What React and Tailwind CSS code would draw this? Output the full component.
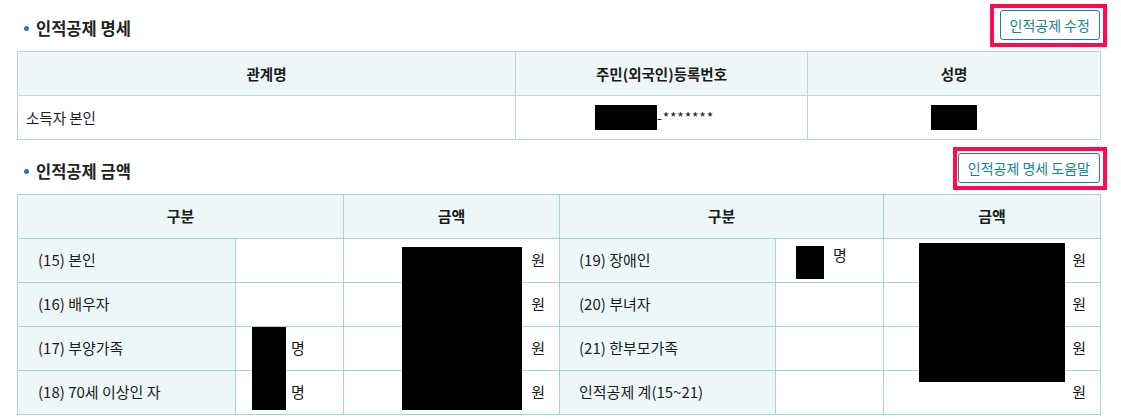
import React from "react";

const font = { fontFamily: '"Noto Sans CJK KR", "Noto Sans", sans-serif' };

function SectionHead({ title, button, redW }) {
  return (
    <div className="flex items-center justify-between h-[30px]">
      <div className="flex items-center pl-[7px] pt-[6px]">
        <span className="w-[5px] h-[5px] rounded-full bg-[#2b6fd6] mr-[7px]" />
        <span className="text-[16.5px] font-bold text-[#222]">{title}</span>
      </div>
      <div className="relative">
        <button className="h-[30px] px-[9px] border border-[#16858f] rounded-[3px] text-[14px] text-[#16858f] bg-white leading-none">
          {button}
        </button>
        <div className={`absolute top-[-6px] bottom-[-7px] right-[-7px] border-4 border-[#ff0a4f] pointer-events-none ${redW}`} />
      </div>
    </div>
  );
}

const th = "border border-[#bcd4da] bg-[#eef7f7] text-[14.5px] font-bold text-[#1a1a1a] text-center";
const td = "border border-[#bcd4da] text-[14.5px] text-[#1a1a1a]";
const th2 = "border border-[#a8d2d8] bg-[#eef7f7] text-[15px] font-bold text-[#1a1a1a] text-center";
const lab = "border border-[#a8d2d8] bg-[#eef7f7] text-[15px] text-[#1a1a1a]";
const cell = "border border-[#a8d2d8] bg-white text-[15px] text-[#1a1a1a]";

const rows = [
  ["(15) 본인", false, "(19) 장애인", true],
  ["(16) 배우자", false, "(20) 부녀자", false],
  ["(17) 부양가족", true, "(21) 한부모가족", false],
  ["(18) 70세 이상인 자", true, "인적공제 계(15~21)", false],
];

export default function App() {
  return (
    <div className="w-[1121px] h-[419px] bg-white overflow-hidden" style={font}>
      <div className="w-[1083px] ml-[17px] pt-[10px]">
        <SectionHead title="인적공제 명세" button="인적공제 수정" redW="left-[-10px]" />
        <table className="w-full mt-[11px] border-collapse table-fixed">
          <colgroup>
            <col className="w-[498px]" />
            <col className="w-[292px]" />
            <col className="w-[293px]" />
          </colgroup>
          <thead>
            <tr className="h-[44px]">
              <th className={th}>관계명</th>
              <th className={th}>주민(외국인)등록번호</th>
              <th className={th}>성명</th>
            </tr>
          </thead>
          <tbody>
            <tr className="h-[44px]">
              <td className={`${td} pl-[8px]`}>소득자 본인</td>
              <td className={td}>
                <div className="flex items-center justify-center pr-[14px]">
                  <span className="w-[62px] h-[25px] bg-black" />
                  <span className="text-[14px] tracking-[0.8px]">-*******</span>
                </div>
              </td>
              <td className={td}>
                <div className="flex justify-center">
                  <span className="w-[46px] h-[25px] bg-black" />
                </div>
              </td>
            </tr>
          </tbody>
        </table>

        <div className="mt-[13px]">
          <SectionHead title="인적공제 금액" button="인적공제 명세 도움말" redW="left-[-5px]" />
        </div>
        <div className="relative mt-[11px]">
          <table className="w-full border-collapse table-fixed">
            <colgroup>
              <col className="w-[218px]" />
              <col className="w-[108px]" />
              <col className="w-[216px]" />
              <col className="w-[216px]" />
              <col className="w-[108px]" />
              <col className="w-[217px]" />
            </colgroup>
            <thead>
              <tr className="h-[44px]">
                <th colSpan={2} className={th2}>구분</th>
                <th className={th2}>금액</th>
                <th colSpan={2} className={th2}>구분</th>
                <th className={th2}>금액</th>
              </tr>
            </thead>
            <tbody>
              {rows.map(([l, lc, r, rc]) => (
                <tr key={l} className="h-[44px]">
                  <td className={`${lab} pl-[20px]`}>{l}</td>
                  <td className={`${cell} pl-[55px]`}>{lc && "명"}</td>
                  <td className={`${cell} text-right pr-[14px]`}>원</td>
                  <td className={`${lab} pl-[19px]`}>{r}</td>
                  <td className={`${cell} pl-[57px]`}>
                    {rc && <span className="relative top-[-5px]">명</span>}
                  </td>
                  <td className={`${cell} text-right pr-[14px]`}>원</td>
                </tr>
              ))}
            </tbody>
          </table>
          <div className="absolute left-[385px] top-[53px] w-[120px] h-[163px] bg-black" />
          <div className="absolute left-[235px] top-[133px] w-[34px] h-[83px] bg-black" />
          <div className="absolute left-[779px] top-[52px] w-[28px] h-[33px] bg-black" />
          <div className="absolute left-[902px] top-[49px] w-[146px] h-[139px] bg-black" />
        </div>
      </div>
    </div>
  );
}
